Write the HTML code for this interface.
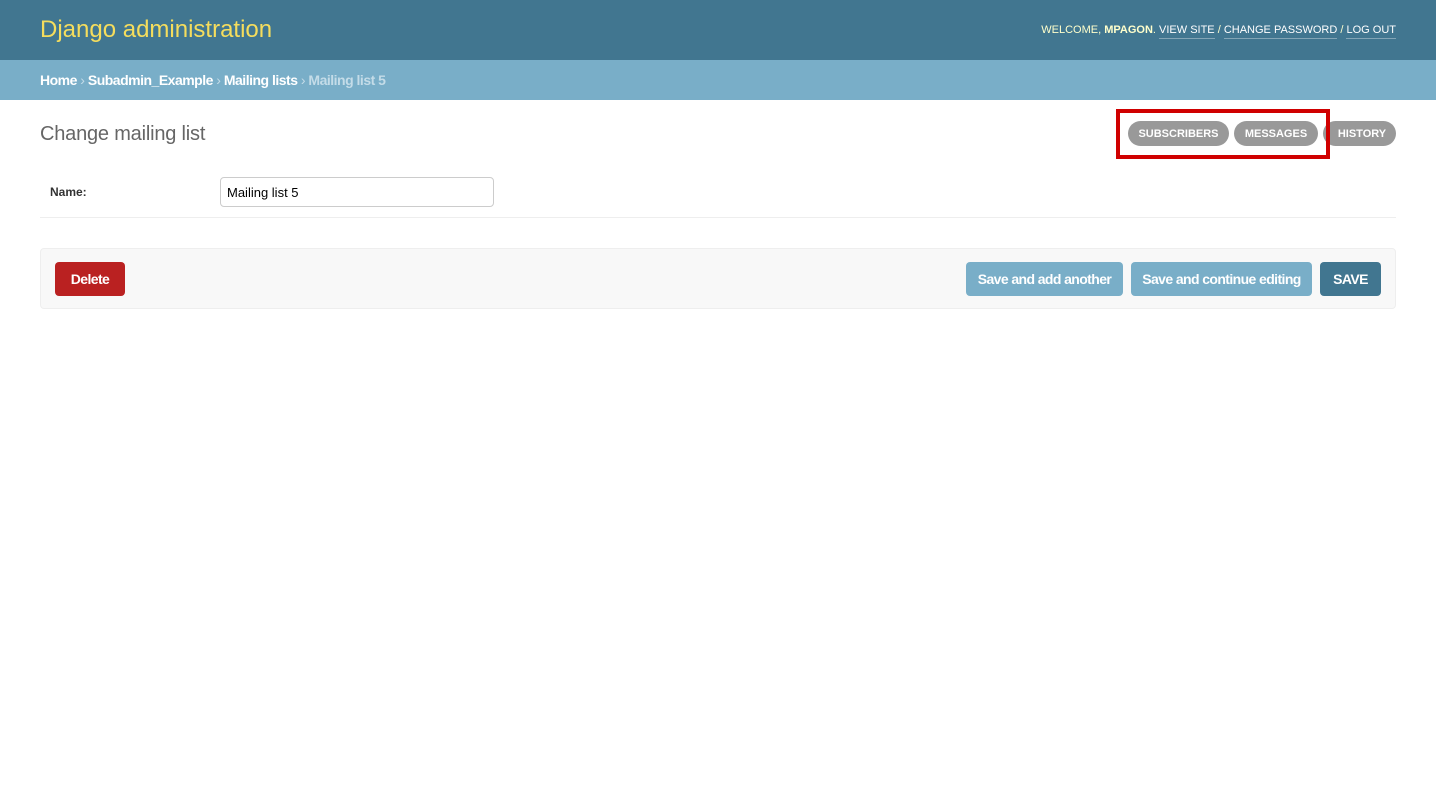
<!DOCTYPE html>
<html><head><meta charset="utf-8"><style>
*{box-sizing:border-box}
body{margin:0;width:1436px;height:803px;background:#fff;font-family:"Liberation Sans",sans-serif;color:#333;position:relative;overflow:hidden}
.hdr{position:absolute;left:0;top:0;width:1436px;height:60px;background:#417690}
.brand{position:absolute;left:40px;top:16px;font-size:24px;color:#f5dd5d;letter-spacing:0px}
.tools{position:absolute;right:40px;top:24px;font-size:11px;color:#ffc;letter-spacing:0px}
.tools b{font-weight:bold}
.tools a{color:#fff;text-decoration:none;border-bottom:1px solid rgba(255,255,255,.35);padding-bottom:2px}
.bc{position:absolute;left:0;top:60px;width:1436px;height:40px;background:#79aec8;color:#c4dce8;font-size:14px;padding:12px 40px;font-weight:bold;letter-spacing:-0.5px}
.bc a{color:#fff;text-decoration:none}
.bc span{color:#c4dce8;font-weight:normal}
h1{position:absolute;left:40px;top:123px;margin:0;font-size:20px;font-weight:300;color:#666;letter-spacing:-0.2px}
.ol{position:absolute;top:121px;height:25px;border-radius:13px;background:#999;color:#fff;font-size:11px;font-weight:bold;text-align:center;line-height:26px;letter-spacing:0px}
.red{position:absolute;left:1116px;top:109px;width:214px;height:50px;border:4px solid #d00000}
.lbl{position:absolute;left:50px;top:185px;font-size:12px;font-weight:bold;color:#333}
.inp{position:absolute;left:220px;top:177px;width:274px;height:30px;border:1px solid #ccc;border-radius:4px;font-size:13px;color:#000;padding:7px 6px}
.hr{position:absolute;left:40px;top:217px;width:1356px;height:1px;background:#eee}
.sub{position:absolute;left:40px;top:248px;width:1356px;height:61px;background:#f8f8f8;border:1px solid #eee;border-radius:4px}
.btn{position:absolute;top:262px;height:34px;border-radius:4px;color:#fff;font-size:14px;font-weight:bold;text-align:center;line-height:34px;letter-spacing:-0.6px}
</style></head><body>
<div class="hdr"><div class="brand">Django administration</div>
<div class="tools">WELCOME, <b>MPAGON</b>. <a>VIEW SITE</a> / <a>CHANGE PASSWORD</a> / <a>LOG OUT</a></div></div>
<div class="bc"><a>Home</a> <span>›</span> <a>Subadmin_Example</a> <span>›</span> <a>Mailing lists</a> <span>›</span> Mailing list 5</div>
<h1>Change mailing list</h1>
<div class="ol" style="left:1128px;width:101px">SUBSCRIBERS</div>
<div class="ol" style="left:1234px;width:84px">MESSAGES</div>
<div class="ol" style="left:1323px;width:73px;padding-left:5px">HISTORY</div>
<div class="red"></div>
<div class="lbl">Name:</div>
<div class="inp">Mailing list 5</div>
<div class="hr"></div>
<div class="sub"></div>
<div class="btn" style="left:55px;width:70px;background:#ba2121">Delete</div>
<div class="btn" style="left:966px;width:157px;background:#79aec8">Save and add another</div>
<div class="btn" style="left:1131px;width:181px;background:#79aec8">Save and continue editing</div>
<div class="btn" style="left:1320px;width:61px;background:#417690">SAVE</div>
</body></html>
